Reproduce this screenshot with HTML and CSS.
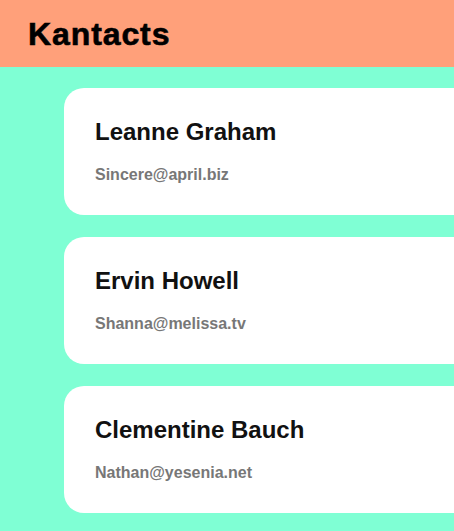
FILE: index.html
```html
<!DOCTYPE html>
<html>
<head>
<meta charset="utf-8">
<link rel="stylesheet" href="styles.css">
</head>
<body>
<header class="top">
  <h1 class="title">Kantacts</h1>
</header>
<ul class="list">
  <li class="card">
    <h2 class="name">Leanne Graham</h2>
    <p class="email">Sincere@april.biz</p>
  </li>
  <li class="card">
    <h2 class="name">Ervin Howell</h2>
    <p class="email">Shanna@melissa.tv</p>
  </li>
  <li class="card">
    <h2 class="name">Clementine Bauch</h2>
    <p class="email">Nathan@yesenia.net</p>
  </li>
</ul>
</body>
</html>
```
FILE: styles.css
```css
html, body {
  margin: 0;
  padding: 0;
  background: #7fffd4;
  overflow: hidden;
  font-family: "Liberation Sans", Arial, sans-serif;
}
.top {
  background: #ffa07a;
  height: 67px;
  display: flex;
  align-items: center;
  padding-left: 28px;
}
.title {
  margin: 0;
  font-size: 32px;
  line-height: 36px;
  font-weight: 700;
  letter-spacing: 0.9px;
  color: #000;
  -webkit-text-stroke: 0.6px #000;
}
.list {
  list-style: none;
  margin: 0;
  padding: 21px 0 0 64px;
}
.card {
  background: #fff;
  width: 600px;
  height: 127px;
  box-sizing: border-box;
  border-radius: 20px;
  padding: 30px 31px 0;
  margin-bottom: 22px;
}
.name {
  margin: 0;
  font-size: 24px;
  line-height: 28px;
  font-weight: 700;
  color: #111;
}
.email {
  margin: 20px 0 0;
  font-size: 16px;
  line-height: 18px;
  font-weight: 700;
  color: #777;
}
```
